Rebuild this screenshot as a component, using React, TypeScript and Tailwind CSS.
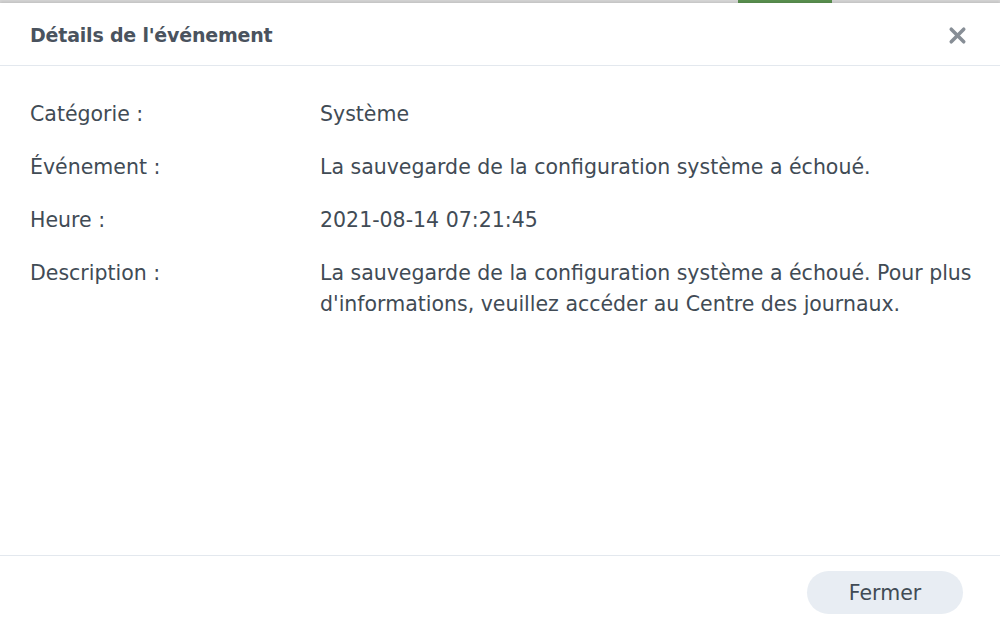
import { X } from 'lucide-react'

const rows: { label: string; value: string }[] = [
  { label: 'Catégorie :', value: 'Système' },
  { label: 'Événement :', value: 'La sauvegarde de la configuration système a échoué.' },
  { label: 'Heure :', value: '2021-08-14 07:21:45' },
  {
    label: 'Description :',
    value: "La sauvegarde de la configuration système a échoué. Pour plus d'informations, veuillez accéder au Centre des journaux.",
  },
]

export default function App() {
  return (
    <div className="flex h-[627px] w-[1000px] flex-col overflow-hidden bg-[#d4d4d4] font-['DejaVu_Sans',sans-serif] text-[#414b55]">
      <div className="flex h-[3px] shrink-0">
        <div className="w-[690px] bg-[#d6d6d6]" />
        <div className="w-[48px] bg-[#d9d9d9]" />
        <div className="w-[94px] bg-[#5a9150]" />
        <div className="flex-1 bg-[#d6d6d6]" />
      </div>
      <div className="flex flex-1 flex-col bg-white shadow-[0_-1px_3px_rgba(0,0,0,0.12)]">
        <header className="flex h-[63px] shrink-0 items-center justify-between border-b border-[#e3e8ee] pl-[30px] pr-[30px] pt-[2px]">
          <h1 className="text-[19px] font-bold tracking-[-0.2px] text-[#4a535e]">Détails de l'événement</h1>
          <button type="button" className="text-[#878e96]">
            <X size={25} strokeWidth={3.4} />
          </button>
        </header>
        <div className="flex-1 pl-[30px] pr-[26px] pt-[33px]">
          <div className="flex flex-col gap-[22px]">
            {rows.map((r) => (
              <div key={r.label} className="grid grid-cols-[290px_1fr] text-[20.5px] leading-[31px]">
                <div>{r.label}</div>
                <div>{r.value}</div>
              </div>
            ))}
          </div>
        </div>
        <footer className="flex h-[72px] shrink-0 items-center justify-end border-t border-[#e3e8ee] pr-[37px] pt-[2px]">
          <button
            type="button"
            className="h-[43px] w-[156px] rounded-full bg-[#e8edf3] pt-[2px] text-[20.5px] text-[#414b55]"
          >
            Fermer
          </button>
        </footer>
      </div>
    </div>
  )
}
